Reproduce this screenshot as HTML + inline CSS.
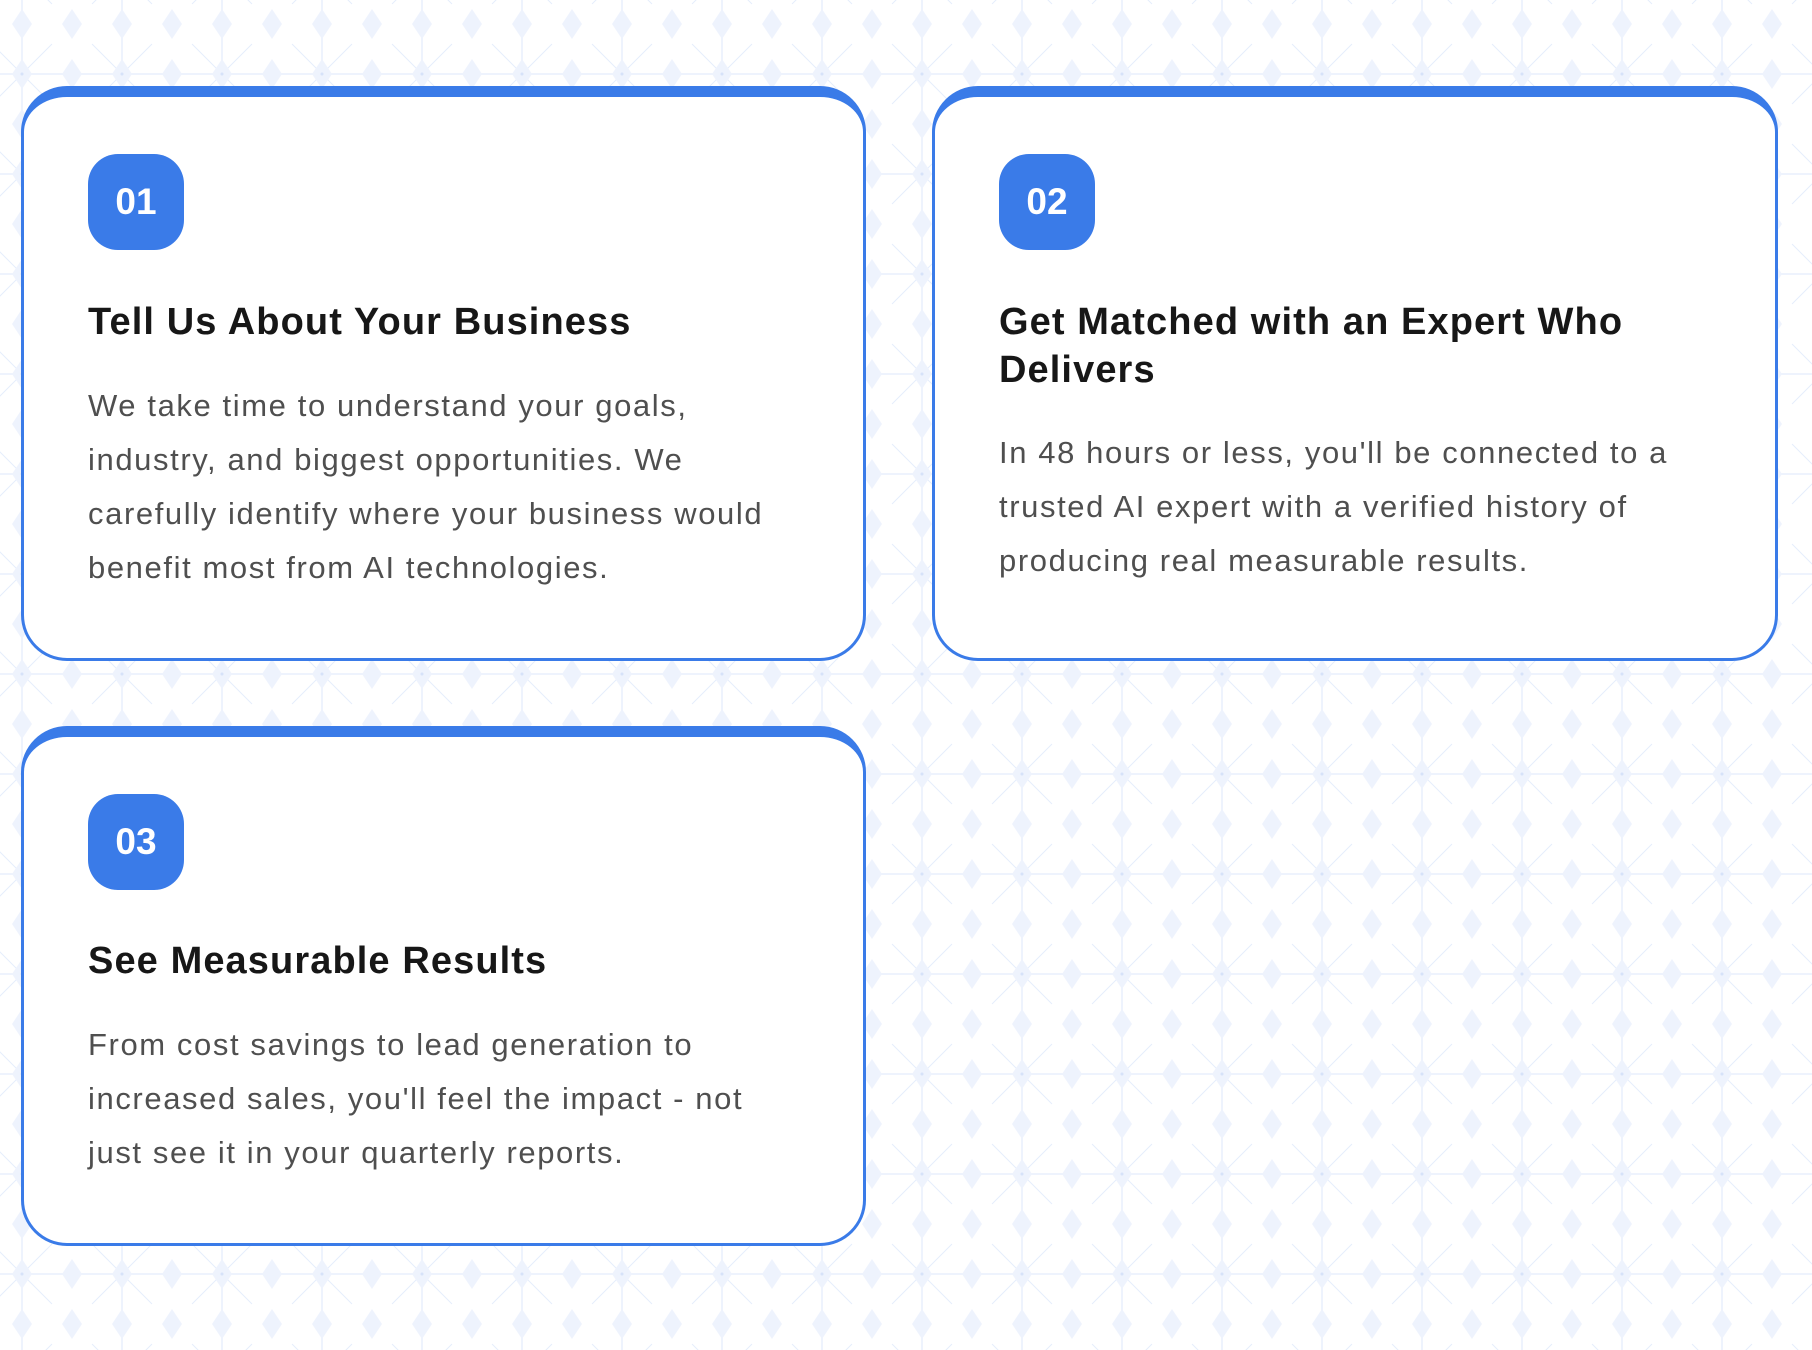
<!DOCTYPE html>
<html><head><meta charset="utf-8"><style>
html,body{margin:0;padding:0;}
body{width:1812px;height:1350px;position:relative;overflow:hidden;background:#fff;font-family:"Liberation Sans",Arial,sans-serif;}
.bg{position:absolute;left:0;top:0;}
.card{position:absolute;box-sizing:border-box;background:#fff;border:3.5px solid #3a7be8;border-top:11px solid #3a7be8;border-radius:46px;}
.badge{position:absolute;width:96px;height:96px;border-radius:30px;background:#3a7be8;color:#fff;font-weight:bold;font-size:37px;line-height:96px;text-align:center;}
.t{position:absolute;font-weight:bold;font-size:38px;line-height:48px;color:#171717;white-space:nowrap;letter-spacing:1.1px;}
.b{position:absolute;font-size:31px;line-height:54px;color:#4f4f4f;white-space:nowrap;letter-spacing:1.6px;}
</style></head><body>
<svg class="bg" width="1812" height="1350" xmlns="http://www.w3.org/2000/svg">
<defs><pattern id="p" x="-28" y="24" width="100" height="100" patternUnits="userSpaceOnUse">
<g stroke="#eef3fd" stroke-width="2"><line x1="50" y1="0" x2="50" y2="100"/><line x1="0" y1="50" x2="100" y2="50"/></g>
<g stroke="#e5edfc" stroke-width="1"><line x1="20" y1="20" x2="80" y2="80"/><line x1="80" y1="20" x2="20" y2="80"/></g>
<g fill="#eef3fd">
<path d="M0 -15 L10 0 L0 15 L-10 0Z"/><path d="M50 -15 L60 0 L50 15 L40 0Z"/><path d="M100 -15 L110 0 L100 15 L90 0Z"/>
<path d="M0 35 L10 50 L0 65 L-10 50Z"/><path d="M50 35 L60 50 L50 65 L40 50Z"/><path d="M100 35 L110 50 L100 65 L90 50Z"/>
<path d="M0 85 L10 100 L0 115 L-10 100Z"/><path d="M50 85 L60 100 L50 115 L40 100Z"/><path d="M100 85 L110 100 L100 115 L90 100Z"/>
</g>
<circle cx="50" cy="50" r="1.5" fill="#d6e2f9"/>
</pattern></defs>
<rect width="1812" height="1350" fill="url(#p)"/>
</svg>

<div class="card" style="left:21px;top:86px;width:845px;height:575px;"></div>
<div class="badge" style="left:88px;top:154px;">01</div>
<div class="t" style="left:88px;top:298px;">Tell Us About Your Business</div>
<div class="b" style="left:88px;top:379px;">We take time to understand your goals,<br>industry, and biggest opportunities. We<br>carefully identify where your business would<br>benefit most from AI technologies.</div>

<div class="card" style="left:932px;top:86px;width:846px;height:575px;"></div>
<div class="badge" style="left:999px;top:154px;">02</div>
<div class="t" style="left:999px;top:298px;">Get Matched with an Expert Who<br>Delivers</div>
<div class="b" style="left:999px;top:426px;">In 48 hours or less, you'll be connected to a<br>trusted AI expert with a verified history of<br>producing real measurable results.</div>

<div class="card" style="left:21px;top:726px;width:845px;height:520px;"></div>
<div class="badge" style="left:88px;top:794px;">03</div>
<div class="t" style="left:88px;top:937px;">See Measurable Results</div>
<div class="b" style="left:88px;top:1018px;">From cost savings to lead generation to<br>increased sales, you'll feel the impact - not<br>just see it in your quarterly reports.</div>
</body></html>
